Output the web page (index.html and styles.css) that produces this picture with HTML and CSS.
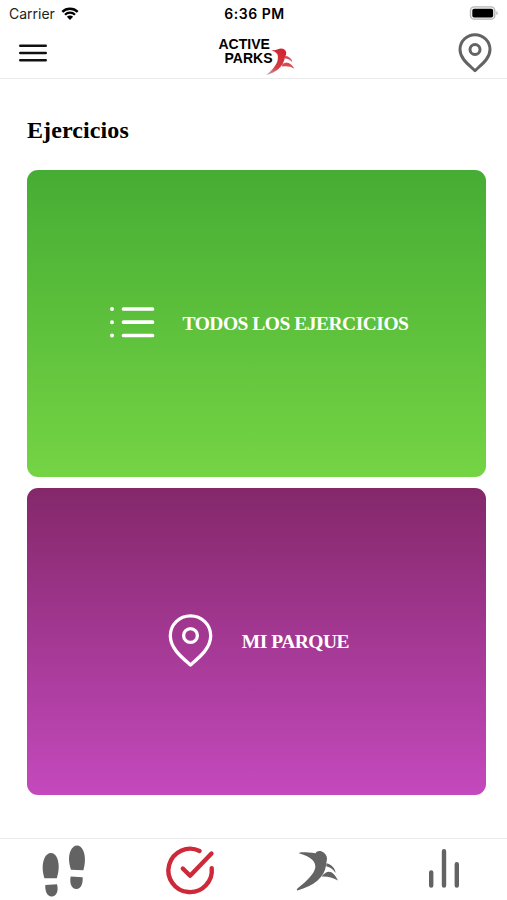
FILE: index.html
```html
<!DOCTYPE html>
<html lang="es">
<head>
    <meta charset="UTF-8">
    <meta name="viewport" content="width=device-width, initial-scale=1.0">
    <title>Active Parks - Ejercicios</title>
    <link rel="stylesheet" href="styles.css">
</head>
<body>
    <header class="header">
        <div class="status-bar">
            <div class="carrier">
                <span>Carrier</span>
                <svg class="wifi" viewBox="0 0 18 13">
                    <path d="M1.3 4.9a11 11 0 0 1 15.4 0M4 7.7a7.1 7.1 0 0 1 10 0" fill="none" stroke="#000" stroke-width="2.3"/>
                    <path d="M9 13 5.9 9.8a4.4 4.4 0 0 1 6.2 0z"/>
                </svg>
            </div>
            <span class="clock">6:36 PM</span>
            <div class="battery">
                <svg viewBox="0 0 32 16">
                    <rect x="1" y="1" width="26" height="13" rx="4" fill="#f4f4f4" stroke="#b5b5b5" stroke-width="1.4"/>
                    <rect x="3" y="2.8" width="22.2" height="9.4" rx="2"/>
                    <path d="M28.7 5.2q2.8 2.3 0 4.6z" fill="#aaa"/>
                </svg>
            </div>
        </div>
        <nav class="navbar">
            <button class="icon-btn menu-btn" title="Menú">
                <svg width="30" height="20" viewBox="0 0 30 20">
                    <path d="M2.3 2.8h25.4M2.3 10h25.4M2.3 17.2h25.4"/>
                </svg>
            </button>
            <div class="logo">
                <span class="logo-text">ACTIVE</span>
                <span class="logo-text logo-second">PARKS</span>
                <svg class="logo-mark" viewBox="0 0 30 30">
                    <defs>
                        <linearGradient id="mark" x1="0.6" y1="0" x2="0.1" y2="1">
                            <stop offset="0" stop-color="#cf2733"/>
                            <stop offset="0.6" stop-color="#d53c45"/>
                            <stop offset="1" stop-color="#c9a0b0"/>
                        </linearGradient>
                    </defs>
                    <path d="M7 4q4 .3 7-1.2Q20 1.500 21.500 6q.2 2.500-1 4-1 8.500-8 13.500-5 3.600-10.500 4.700Q9 23 12.300 16.500q2-5 .7-8.500Q11 5 7 4z" fill="url(#mark)"/>
                    <path d="M20.500 9.500q6 1 7 6.300-3-3.300-7.300-3.600zM17.500 17.800q6-5.300 12 4.200-4.500-3-12-2.200z" fill="#d94b53"/>
                </svg>
            </div>
            <button class="icon-btn location-btn" title="Mi parque">
                <svg width="34" height="40" viewBox="0 0 34 40">
                    <path d="M17 37.700C10.500 31.500 2 25.500 2 16.500a15 14.800 0 0 1 30 0c0 9-8.500 15-15 21.200z"/>
                    <circle cx="17" cy="16.500" r="5"/>
                </svg>
            </button>
        </nav>
    </header>

    <main class="main-content">
        <h1>Ejercicios</h1>
        <a class="card card-green" href="#">
            <svg class="card-icon" viewBox="0 0 53 53">
                <path d="M18.500 12h29M18.500 25.200h29M18.500 38.500h29" stroke-width="3.700"/>
                <path d="M7 12h0M7 25.200h0M7 38.500h0" stroke-width="4"/>
            </svg>
            <span>TODOS LOS EJERCICIOS</span>
        </a>
        <a class="card card-purple" href="#">
            <svg class="card-icon" viewBox="0 0 53 53">
                <path d="M26.500 50C18 42.500 6.300 33.500 6.300 20.800a20.200 20 0 0 1 40.400 0C46.700 33.500 35 42.500 26.500 50z"/>
                <circle cx="26.500" cy="20.500" r="6.900"/>
            </svg>
            <span>MI PARQUE</span>
        </a>
    </main>

    <nav class="tab-bar">
        <a class="tab" href="#" title="Actividad">
            <svg width="54" height="54" viewBox="0 0 54 54">
                <path d="M8.400 34.300C6.300 27 6 20 8.300 14.500c3-7.300 10-7.300 12.800-.5 2.400 6 2 13-.3 20.300z"/>
                <path d="M9.300 41l11.700-.8c1.700 6.300-.2 11.600-4.700 12.200-4.800.6-7.300-4.400-7-11.400z"/>
                <path d="M35 25.800c-2.200-6.800-2.800-13-.6-18.500 3-7.500 10-7.500 12.900-.5 2.400 6 2 12.700.1 19.500z"/>
                <path d="M34.700 32.400l12 .8c.3 7-2 12-6.500 11.700-4.500-.3-7-5.500-5.500-12.500z"/>
            </svg>
        </a>
        <a class="tab tab-active" href="#" title="Ejercicios">
            <svg width="54" height="54" viewBox="0 0 54 54">
                <path d="M36.600 6.900A21.700 21.700 0 1 0 48.700 24.100M19.800 24.500l7.300 7.300L48.500 9.500"/>
            </svg>
        </a>
        <a class="tab" href="#" title="Parques">
            <svg width="54" height="54" viewBox="0 0 54 54">
                <path d="M9 9.200C9 7.700 17 8.300 25.500 9.200 27 6.500 31 6.500 34 8.800c2.500 2 3.500 5 2.800 7.700-.3 1.500-.6 3-.8 5C34.500 33 24 42 7.300 46.500c-1-.5-.3-1.800 1-2.800C17.500 36.500 24 30 25.300 23.500 25.800 18 22 13 9 9.200z"/>
                <path d="M36.500 19.200c4.800 1.200 8.600 4.800 9.200 9.800-2.800-3.800-5.200-5.800-9.500-6.800zM31.500 32.600C37.500 25 43 26 48 36.500 42.500 33.700 38 32.300 31.500 32.600z"/>
            </svg>
        </a>
        <a class="tab tab-stats" href="#" title="Estadísticas">
            <svg width="54" height="54" viewBox="0 0 54 54">
                <path d="M14.200 28.500v13M27 7.300v34.200M39.800 20.300v21.200"/>
            </svg>
        </a>
    </nav>
</body>
</html>
```
FILE: styles.css
```css
:root {
    --foreground: #000;
    --icon: #636363;
    --accent: #ce2939;
    --border: #ebebeb;
}

* {
    margin: 0;
    padding: 0;
    box-sizing: border-box;
}

body {
    font-family: "Liberation Serif", "Times New Roman", serif;
    background: #fff;
    color: var(--foreground);
    height: 100vh;
    display: flex;
    flex-direction: column;
    overflow: hidden;
}

svg {
    display: block;
    overflow: visible;
}

a {
    text-decoration: none;
}

.header {
    height: 79px;
    border-bottom: 1px solid var(--border);
}

.status-bar {
    display: grid;
    grid-template-columns: 1fr auto 1fr;
    align-items: center;
    height: 27px;
    padding: 0 7px 0 9px;
    font-family: Inter, sans-serif;
    font-size: 14px;
}

.carrier {
    display: flex;
    align-items: center;
    gap: 6px;
    color: #222;
}

.wifi {
    width: 18px;
    height: 13px;
}

.clock {
    font-weight: 600;
    letter-spacing: 0.5px;
}

.battery {
    justify-self: end;
}

.battery svg {
    width: 31px;
    height: 15px;
}

.navbar {
    display: grid;
    grid-template-columns: 1fr auto 1fr;
    align-items: center;
    height: 51px;
    padding: 0 15px 0 18px;
}

.icon-btn {
    border: none;
    background: none;
    cursor: pointer;
}

.icon-btn svg {
    fill: none;
    stroke-linecap: round;
    stroke-linejoin: round;
}

.menu-btn svg {
    stroke: #111;
    stroke-width: 2.6;
}

.location-btn {
    justify-self: end;
}

.location-btn svg {
    stroke: var(--icon);
    stroke-width: 3;
}

.logo {
    position: relative;
    width: 76px;
    height: 32px;
    margin-left: 3px;
    font-family: "Liberation Sans", Arial, sans-serif;
    font-size: 14px;
    font-weight: 700;
    line-height: 14px;
}

.logo-text {
    display: block;
}

.logo-second {
    padding-left: 6px;
}

.logo-mark {
    position: absolute;
    left: 45px;
    top: 9px;
    width: 31px;
    height: 31px;
}

.main-content {
    flex: 1;
    display: flex;
    flex-direction: column;
    padding: 37px 21px 0 27px;
}

h1 {
    font-size: 24px;
    line-height: 28px;
    letter-spacing: 0.1px;
    margin-bottom: 26px;
}

.card {
    display: flex;
    align-items: center;
    justify-content: center;
    gap: 25px;
    height: 307px;
    border-radius: 11px;
    color: #fff;
    font-size: 19.5px;
    font-weight: 700;
    letter-spacing: -0.5px;
}

.card + .card {
    margin-top: 11px;
}

.card-green {
    background: linear-gradient(#46ad34, #75d444);
}

.card-purple {
    background: linear-gradient(#84286a, #c449bd);
}

.card-icon {
    width: 53px;
    height: 53px;
    fill: none;
    stroke: #fff;
    stroke-width: 3.3;
    stroke-linecap: round;
    stroke-linejoin: round;
}

.tab-bar {
    display: grid;
    grid-template-columns: repeat(4, 1fr);
    height: 62px;
    border-top: 1px solid var(--border);
}

.tab {
    display: flex;
    justify-content: center;
    padding-top: 5px;
    fill: var(--icon);
}

.tab-active svg,
.tab-stats svg {
    fill: none;
    stroke-width: 4.4;
    stroke-linecap: round;
    stroke-linejoin: round;
}

.tab-active svg {
    stroke: var(--accent);
}

.tab-stats svg {
    stroke: var(--icon);
}
```
